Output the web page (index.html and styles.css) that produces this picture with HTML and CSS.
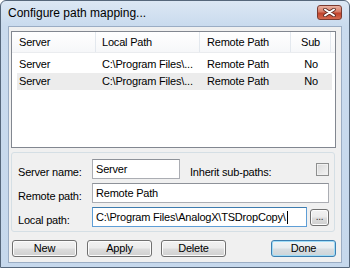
FILE: index.html
```html
<!DOCTYPE html>
<html>
<head>
  <meta charset="UTF-8">
  <title>Configure path mapping...</title>
  <link rel="stylesheet" href="styles.css">
</head>
<body>
  <div class="window">
    <div class="titlebar">
      <div class="title">Configure path mapping...</div>
      <div class="close-btn">
        <svg width="13" height="9" viewBox="0 0 13 9">
          <path d="M2 1.5 L11 7.5 M11 1.5 L2 7.5" stroke="#5a2a22" stroke-width="3.6" stroke-linecap="round"/>
          <path d="M2 1.5 L11 7.5 M11 1.5 L2 7.5" stroke="#ffffff" stroke-width="2" stroke-linecap="round"/>
        </svg>
      </div>
    </div>

    <div class="client">
      <div class="list">
        <div class="list-head">
          <div class="col col-server">Server</div>
          <div class="col col-local">Local Path</div>
          <div class="col col-remote">Remote Path</div>
          <div class="col col-sub">Sub</div>
        </div>
        <div class="list-body">
          <div class="list-row">
            <div class="cell cell-server">Server</div>
            <div class="cell cell-local">C:\Program Files\...</div>
            <div class="cell cell-remote">Remote Path</div>
            <div class="cell cell-sub">No</div>
          </div>
          <div class="list-row selected">
            <div class="cell cell-server">Server</div>
            <div class="cell cell-local">C:\Program Files\...</div>
            <div class="cell cell-remote">Remote Path</div>
            <div class="cell cell-sub">No</div>
          </div>
        </div>
      </div>

      <div class="group">
        <div class="form-row">
          <div class="label">Server name:</div>
          <div class="input input-short">Server</div>
          <div class="label label-inherit">Inherit sub-paths:</div>
          <div class="checkbox"></div>
        </div>
        <div class="form-row">
          <div class="label">Remote path:</div>
          <div class="input">Remote Path</div>
        </div>
        <div class="form-row">
          <div class="label">Local path:</div>
          <div class="input focused">C:\Program Files\AnalogX\TSDropCopy\<span class="caret"></span></div>
          <div class="btn btn-browse">...</div>
        </div>
      </div>

      <div class="buttons">
        <div class="btn btn-main">New</div>
        <div class="btn btn-main">Apply</div>
        <div class="btn btn-main btn-delete">Delete</div>
        <div class="btn btn-main btn-done">Done</div>
      </div>
    </div>
  </div>
</body>
</html>
```

FILE: styles.css
```css
body {
  margin: 0;
  padding: 0;
  width: 350px;
  height: 268px;
  overflow: hidden;
  background: #ffffff;
  font-family: 'Liberation Sans', Arial, sans-serif;
  font-size: 11px;
  letter-spacing: -0.2px;
  color: #000000;
}

.window {
  width: 350px;
  height: 268px;
  box-sizing: border-box;
  border: 1px solid #56677b;
  border-radius: 6px 6px 0 0;
  background: linear-gradient(#dce7f4, #cadbee 24px, #c6d8ec);
  padding: 0 7px 4px 7px;
  display: flex;
  flex-direction: column;
}

/* Title bar */
.titlebar {
  height: 25px;
  flex-shrink: 0;
  display: flex;
  align-items: flex-start;
  justify-content: space-between;
}

.title {
  font-size: 12px;
  letter-spacing: 0;
  line-height: 14px;
  margin-top: 5px;
}

.close-btn {
  width: 25px;
  height: 15px;
  margin-top: 4px;
  box-sizing: border-box;
  border: 1px solid #7a3a30;
  border-radius: 3px;
  background: linear-gradient(#eab3a4, #d77a64 45%, #c0432c 55%, #d56a4f);
  display: flex;
  align-items: center;
  justify-content: center;
}

/* Client area */
.client {
  flex: 1;
  background: #f0f0f0;
  border: 1px solid #9badc4;
  padding: 4px 5px 0 2px;
  display: flex;
  flex-direction: column;
}

/* List view */
.list {
  height: 117px;
  box-sizing: border-box;
  border: 1px solid #828790;
  background: #ffffff;
  flex-shrink: 0;
}

.list-head {
  display: flex;
  height: 21px;
  box-sizing: border-box;
  background: linear-gradient(#ffffff, #f6f7f9);
  border-bottom: 1px solid #eaecef;
}

.col {
  box-sizing: border-box;
  line-height: 20px;
  border-right: 1px solid #e3e8ee;
  white-space: nowrap;
}

.col-server { width: 84px; padding-left: 7px; }
.col-local { width: 104px; padding-left: 6px; }
.col-remote { width: 91px; padding-left: 7px; }
.col-sub { width: 40px; text-align: center; }

.list-body {
  padding: 3px 3px 0 5px;
}

.list-row {
  display: flex;
  height: 17px;
  line-height: 17px;
}

.list-row.selected {
  background: #ececec;
}

.cell {
  box-sizing: border-box;
  white-space: nowrap;
}

.cell-server { width: 79px; padding-left: 2px; }
.cell-local { width: 104px; padding-left: 6px; }
.cell-remote { width: 91px; padding-left: 7px; }
.cell-sub { width: 40px; text-align: center; }

/* Group box */
.group {
  margin-top: 4px;
  margin-right: 1px;
  border: 1px solid #d5dfe5;
  border-radius: 3px;
  padding: 6px 5px 4px 6px;
  display: flex;
  flex-direction: column;
  gap: 4px;
}

.form-row {
  display: flex;
  align-items: center;
  height: 20px;
}

.label {
  width: 74px;
  flex-shrink: 0;
  line-height: 13px;
  align-self: flex-end;
  white-space: nowrap;
}

.label-inherit {
  width: auto;
  margin-left: 10px;
}

.input {
  flex: 1;
  height: 20px;
  box-sizing: border-box;
  border: 1px solid #abadb3;
  border-top-color: #8e9299;
  background: #ffffff;
  padding-left: 3px;
  line-height: 18px;
  white-space: nowrap;
  overflow: hidden;
  display: flex;
  align-items: center;
}

.input-short {
  flex: none;
  width: 88px;
}

.input.focused {
  border-color: #5e9ed6;
  border-top-color: #3d7bad;
}

.caret {
  display: inline-block;
  width: 1px;
  height: 13px;
  background: #000000;
  margin-left: 1px;
}

.checkbox {
  width: 13px;
  height: 13px;
  box-sizing: border-box;
  margin-left: auto;
  align-self: flex-end;
  margin-bottom: 3px;
  border: 1px solid #8e8f8f;
  background: linear-gradient(135deg, #d8d8d8, #f4f4f4);
  box-shadow: inset 0 0 0 1px #f0f0f0;
}

/* Buttons */
.btn {
  box-sizing: border-box;
  border: 1px solid #707070;
  border-radius: 3px;
  background: linear-gradient(#f2f2f2, #ebebeb 48%, #dddddd 52%, #cfcfcf);
  box-shadow: inset 0 0 0 1px #fcfcfc;
  text-align: center;
  white-space: nowrap;
}

.btn-browse {
  width: 19px;
  height: 17px;
  margin-left: 3px;
  line-height: 13px;
  font-size: 10px;
  color: #333333;
}

.buttons {
  display: flex;
  margin-top: 8px;
  padding-left: 1px;
  gap: 10px;
}

.btn-main {
  width: 65px;
  height: 17px;
  line-height: 15px;
}

.btn-delete {
  margin-left: -1px;
}

.btn-done {
  margin-left: auto;
  border-color: #3c7fb1;
  box-shadow: inset 0 0 0 1px #9fdcf7;
  background: linear-gradient(#f0f4f6, #e7ecef 48%, #d8dee2 52%, #cdd4d8);
}
```
